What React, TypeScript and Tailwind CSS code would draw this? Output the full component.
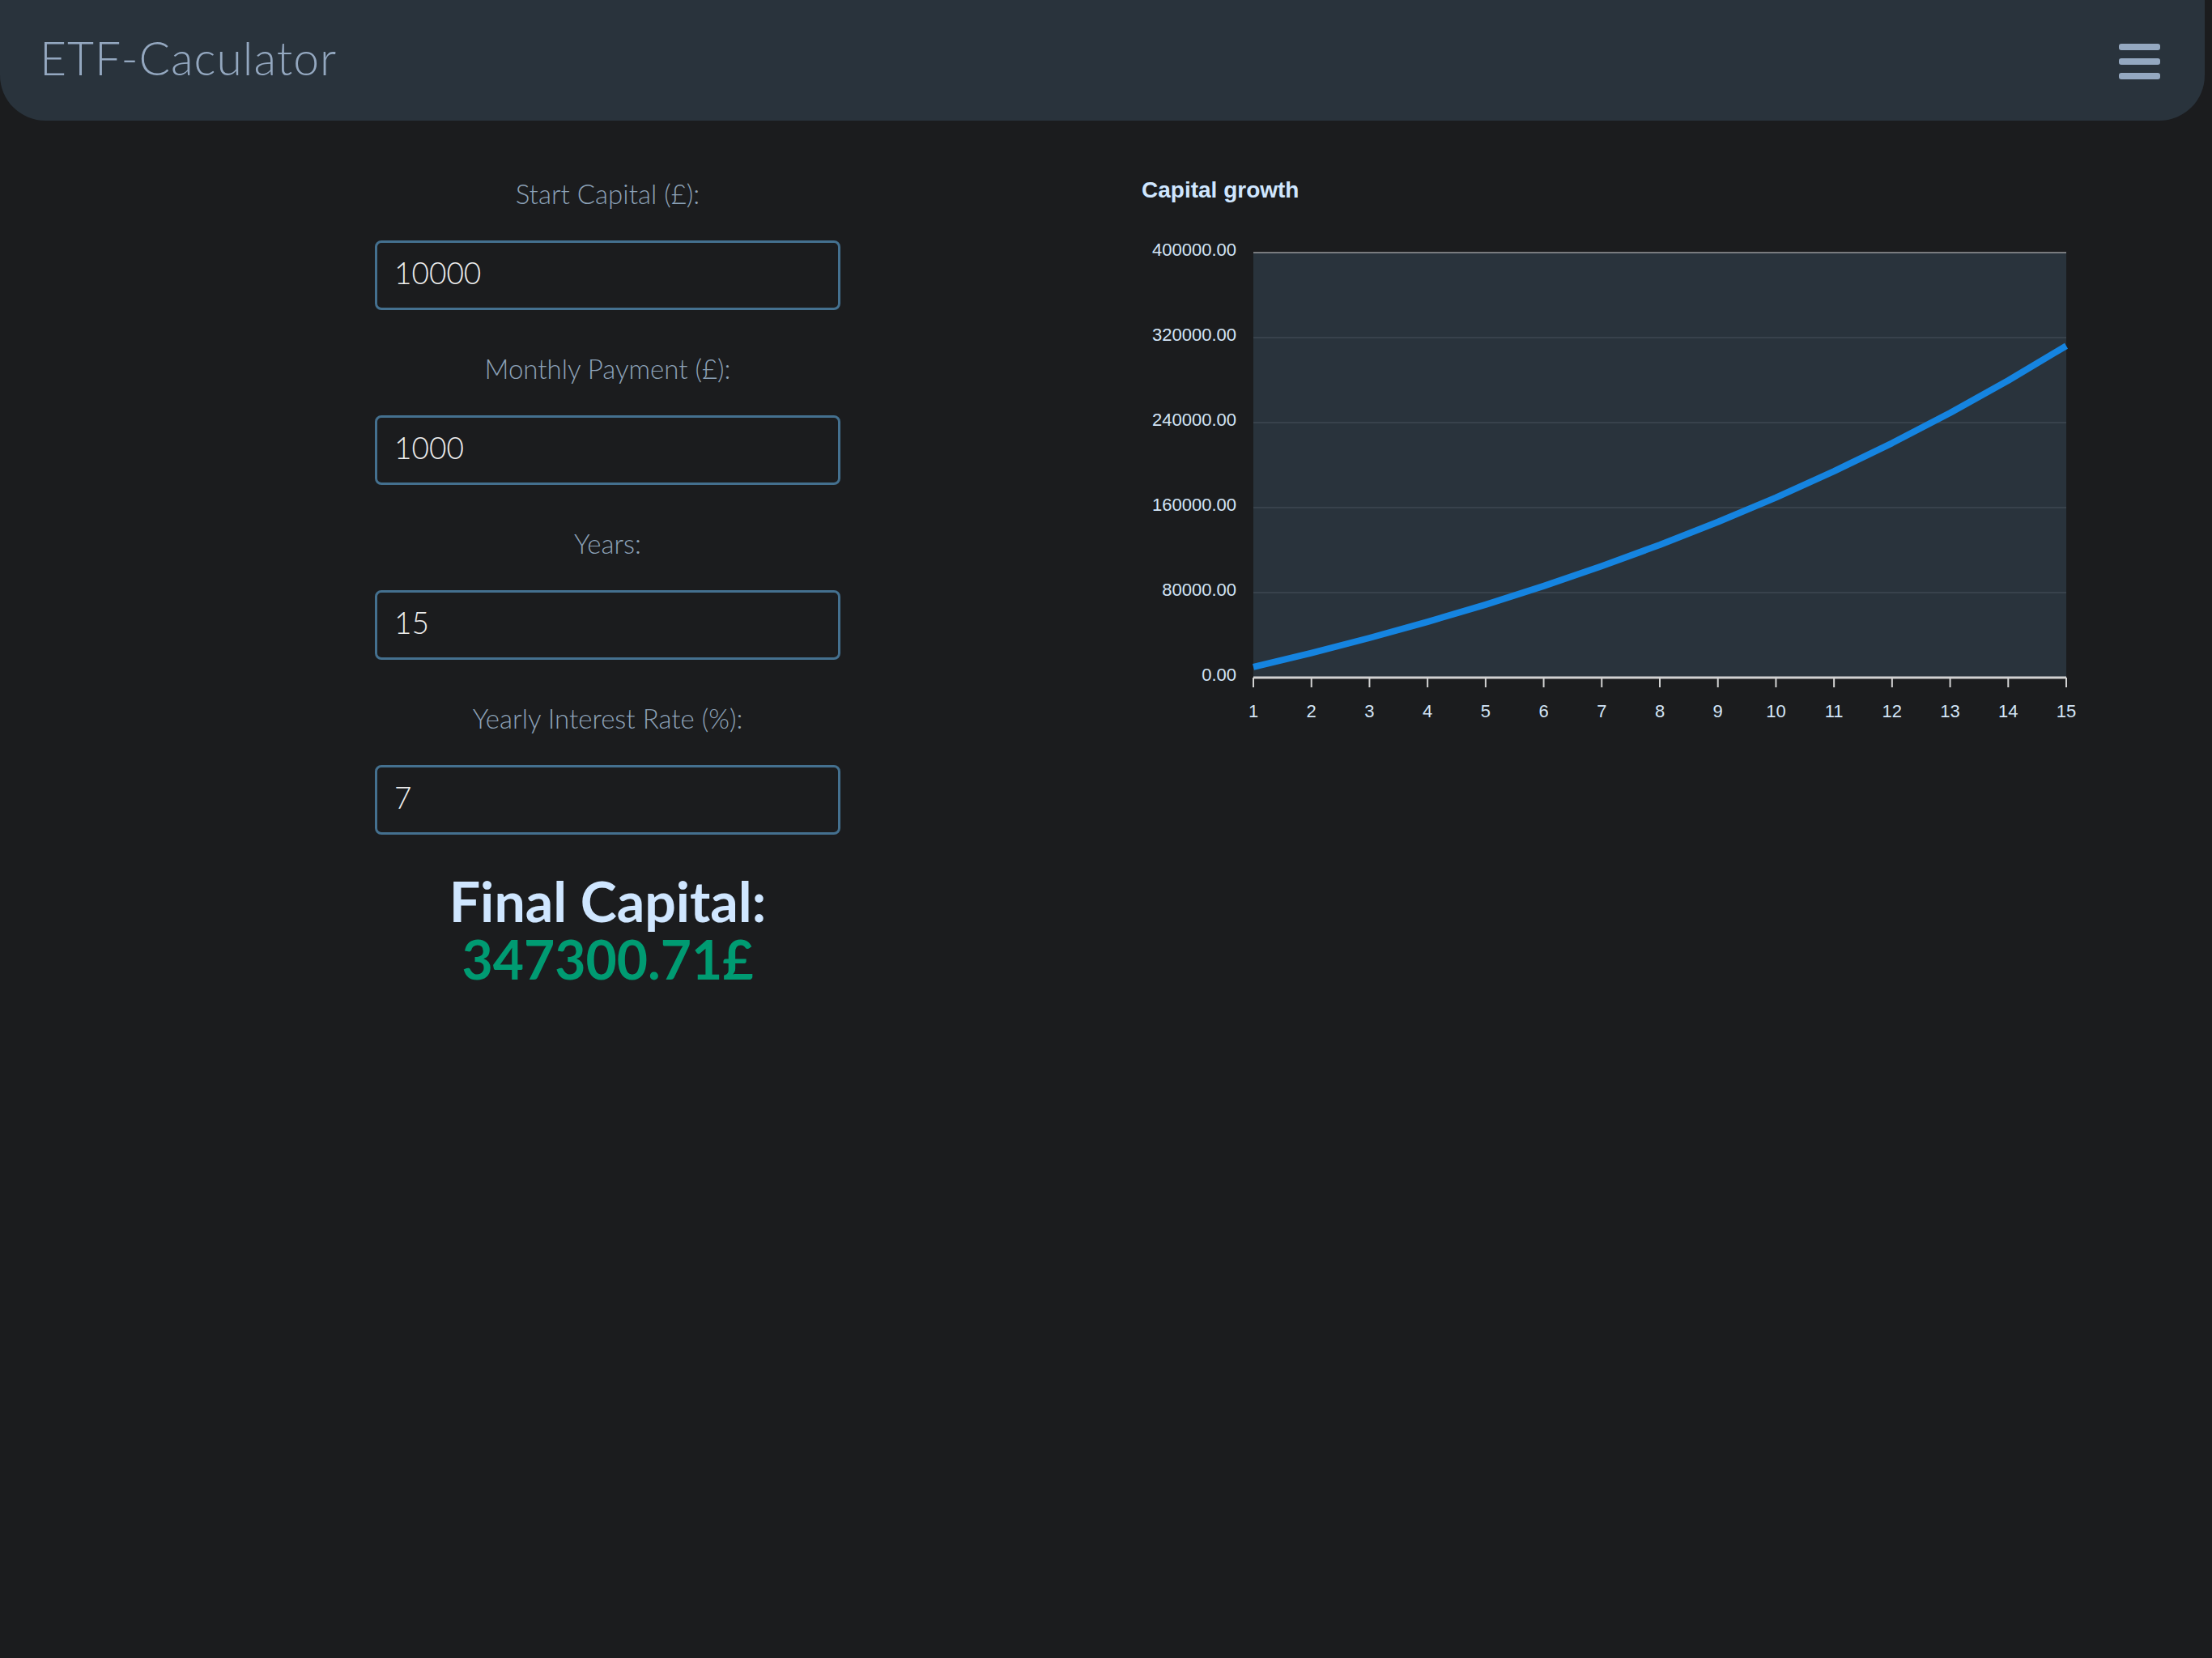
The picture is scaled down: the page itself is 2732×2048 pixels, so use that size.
import { useState } from 'react';

const FIELDS = [
  { label: 'Start Capital (£):', value: '10000' },
  { label: 'Monthly Payment (£):', value: '1000' },
  { label: 'Years:', value: '15' },
  { label: 'Yearly Interest Rate (%):', value: '7' },
];

// chart geometry (svg units = px)
const PLOT_L = 148;
const PLOT_R = 1152;
const PLOT_T = 93;
const PLOT_B = 618;
const Y_MAX = 400000;

function growth(start: number, monthly: number, years: number, rate: number) {
  const r = rate / 100 / 12;
  const out: number[] = [];
  for (let i = 0; i < years; i++) {
    const f = Math.pow(1 + r, i * 12);
    out.push(start * f + monthly * ((f - 1) / r) * (1 + r));
  }
  return out;
}

function Field({ label, value }: { label: string; value: string }) {
  const [v, setV] = useState(value);
  return (
    <div className="flex flex-col items-stretch">
      <label className="h-[40px] text-center text-[33px] leading-[40px] font-light text-[#8da2b8]">{label}</label>
      <input
        type="text"
        value={v}
        onChange={(e) => setV(e.target.value)}
        className="mt-[38px] h-[86px] w-full rounded-[8px] border-[3px] border-[#44708f] bg-transparent pl-[21px] pb-[8px] text-[37px] font-light text-[#ededed] outline-none"
      />
    </div>
  );
}

function Chart() {
  const data = growth(10000, 1000, 15, 7);
  const step = (PLOT_R - PLOT_L) / (data.length - 1);
  const yOf = (v: number) => PLOT_B - (v / Y_MAX) * (PLOT_B - PLOT_T);
  const pts = data.map((v, i) => `${(PLOT_L + i * step).toFixed(1)},${yOf(v).toFixed(1)}`).join(' ');
  const grid = [400000, 320000, 240000, 160000, 80000, 0];

  return (
    <svg width={1180} height={690} className="ml-[362px] shrink-0" style={{ fontFamily: '"Liberation Sans", Arial, sans-serif' }}>
      <text x={10} y={25} fontSize={28} fontWeight={700} fill="#cfe6ff">
        Capital growth
      </text>
      <rect x={PLOT_L} y={PLOT_T} width={PLOT_R - PLOT_L} height={PLOT_B - PLOT_T} fill="#29333c" />
      {grid.map((g) => {
        const y = yOf(g);
        const edge = g === 0 || g === Y_MAX;
        return (
          <g key={g}>
            <line
              x1={PLOT_L}
              x2={PLOT_R}
              y1={y}
              y2={y}
              stroke={edge ? '#d2d2d2' : '#48525c'}
              strokeWidth={g === 0 ? 3 : 1}
            />
            <text x={127} y={y + 4} fontSize={22} textAnchor="end" fill="#d3e5f7">
              {g.toFixed(2)}
            </text>
          </g>
        );
      })}
      {data.map((_, i) => {
        const x = PLOT_L + i * step;
        return (
          <g key={i}>
            <line x1={x} x2={x} y1={PLOT_B} y2={PLOT_B + 12} stroke="#d2d2d2" strokeWidth={2} />
            <text x={x} y={667} fontSize={22} textAnchor="middle" fill="#d3e5f7">
              {i + 1}
            </text>
          </g>
        );
      })}
      <polyline points={pts} fill="none" stroke="#1584e0" strokeWidth={8} strokeLinejoin="round" />
    </svg>
  );
}

export default function App() {
  return (
    <div className="min-h-screen bg-[#1b1c1e]" style={{ fontFamily: 'Lato, "Open Sans", sans-serif' }}>
      {/* header */}
      <header className="flex h-[149px] w-[2723px] items-center justify-between rounded-b-[56px] bg-[#29333c] pl-[49px] pr-[55px]">
        <h1 className="pb-[6px] text-[57px] tracking-[1px] font-light text-[#94a8c0]">ETF-Caculator</h1>
        <button className="flex flex-col gap-[10px] pt-[3px]">
          <span className="block h-[8px] w-[51px] rounded-[3px] bg-[#94a8c0]" />
          <span className="block h-[8px] w-[51px] rounded-[3px] bg-[#94a8c0]" />
          <span className="block h-[8px] w-[51px] rounded-[3px] bg-[#94a8c0]" />
        </button>
      </header>

      <main className="flex items-start pt-[70px]">
        <div className="ml-[463px] flex w-[575px] shrink-0 flex-col gap-[52px]">
          {FIELDS.map((f) => (
            <Field key={f.label} label={f.label} value={f.value} />
          ))}
          <div className="-mt-[6px] text-center leading-[72px] font-bold">
            <div className="text-[68px] text-[#cfe6ff]">Final Capital:</div>
            <div className="text-[66px] text-[#009b72]">347300.71£</div>
          </div>
        </div>
        <Chart />
      </main>
    </div>
  );
}
